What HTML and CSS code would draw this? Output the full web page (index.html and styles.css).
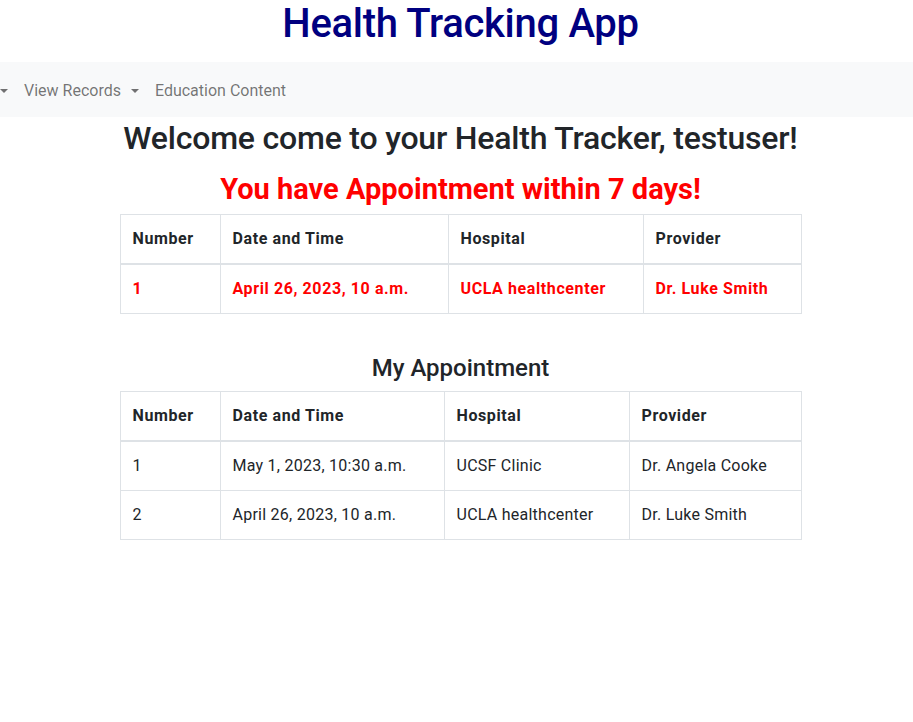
FILE: index.html
```html
<!DOCTYPE html>
<html lang="en">
<head>
<meta charset="utf-8">
<title>Health Tracking App</title>
<link rel="stylesheet" href="styles.css">
</head>
<body>
<div class="page">
  <h1 class="app-title">Health Tracking App</h1>
</div>
<nav class="navbar">
  <ul class="nav-list">
    <li class="nav-item nav-stub"><span class="caret"></span></li>
    <li class="nav-item">View Records <span class="caret"></span></li>
    <li class="nav-item">Education Content</li>
  </ul>
</nav>
<main class="page content">
  <h2 class="welcome">Welcome come to your Health Tracker, testuser!</h2>
  <h3 class="alert-title">You have Appointment within 7 days!</h3>
  <table class="appt-table alert-table">
    <colgroup>
      <col class="c1"><col class="a2"><col class="a3"><col class="a4">
    </colgroup>
    <thead>
      <tr><th>Number</th><th>Date and Time</th><th>Hospital</th><th>Provider</th></tr>
    </thead>
    <tbody>
      <tr><td>1</td><td>April 26, 2023, 10 a.m.</td><td>UCLA healthcenter</td><td>Dr. Luke Smith</td></tr>
    </tbody>
  </table>

  <h4 class="section-title">My Appointment</h4>
  <table class="appt-table">
    <colgroup>
      <col class="c1"><col class="b2"><col class="b3"><col class="b4">
    </colgroup>
    <thead>
      <tr><th>Number</th><th>Date and Time</th><th>Hospital</th><th>Provider</th></tr>
    </thead>
    <tbody>
      <tr><td>1</td><td>May 1, 2023, 10:30 a.m.</td><td>UCSF Clinic</td><td>Dr. Angela Cooke</td></tr>
      <tr><td>2</td><td>April 26, 2023, 10 a.m.</td><td>UCLA healthcenter</td><td>Dr. Luke Smith</td></tr>
    </tbody>
  </table>
</main>
</body>
</html>
```
FILE: styles.css
```css
* { box-sizing: border-box; }
html, body { margin: 0; padding: 0; background: #fff; }
body {
  font-family: Roboto, Inter, "Liberation Sans", sans-serif;
  font-size: 16px;
  line-height: 1.5;
  color: #212529;
}
.page {
  margin-left: 8px;
  text-align: center;
}
h1, h2, h3, h4 { margin: 0; font-weight: 500; line-height: 1.2; }
.app-title {
  font-size: 40px;
  color: #000080;
  letter-spacing: -0.3px;
  height: 62px;
}
.navbar {
  background: #f8f9fa;
  height: 55px;
  display: flex;
  align-items: center;
  padding-top: 2px;
  overflow: hidden;
}
.nav-list {
  list-style: none;
  margin: 0;
  padding: 0;
  display: flex;
}
.nav-item {
  color: rgba(0,0,0,0.55);
  padding: 8px 8px;
  white-space: nowrap;
  display: flex;
  align-items: center;
}
.nav-stub { padding: 8px 8px 8px 0; }
.nav-stub .caret { margin-left: 0; }
.caret {
  display: inline-block;
  margin-left: 10px;
  width: 0; height: 0;
  border-top: 4px solid currentColor;
  border-left: 4px solid transparent;
  border-right: 4px solid transparent;
}
.content { padding-top: 2px; }
.welcome { font-size: 32px; letter-spacing: -0.2px; margin-bottom: 8px; }
.alert-title { font-size: 29px; font-weight: 700; color: #ff0000; margin: 15px 0 7px; }
.section-title { font-size: 24px; margin: 40px 0 8px; }
.appt-table {
  width: 681px;
  margin: 0 auto;
  border-collapse: collapse;
  text-align: left;
  table-layout: fixed;
}
.appt-table th, .appt-table td {
  border: 1px solid #dee2e6;
  padding: 12px 12px;
  vertical-align: top;
  letter-spacing: 0.25px;
}
.appt-table th { font-weight: 700; letter-spacing: 0.6px; }
.appt-table thead th { border-bottom: 2px solid #dee2e6; }
.alert-table td { color: #ff0000; font-weight: 700; letter-spacing: 0.6px; }
.c1 { width: 100px; }
.a2 { width: 228px; }
.a3 { width: 195px; }
.a4 { width: 158px; }
.b2 { width: 224px; }
.b3 { width: 185px; }
.b4 { width: 172px; }
```
